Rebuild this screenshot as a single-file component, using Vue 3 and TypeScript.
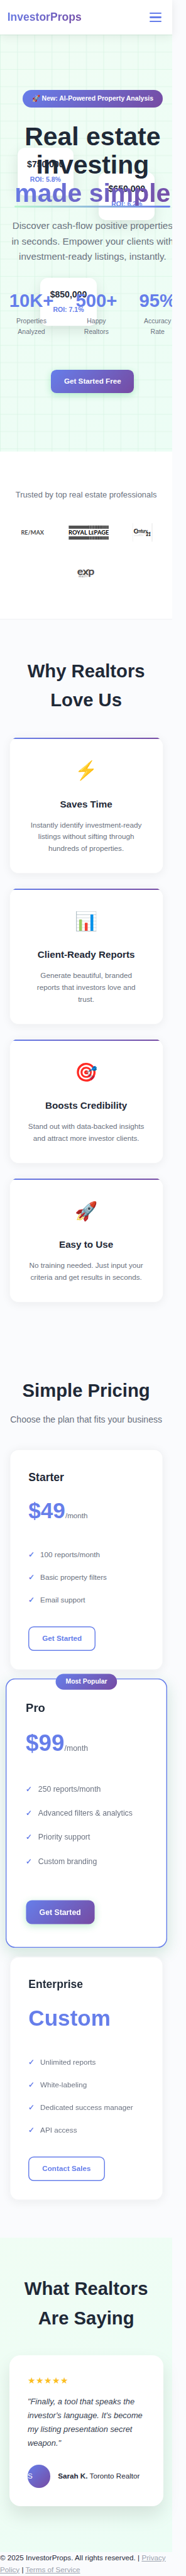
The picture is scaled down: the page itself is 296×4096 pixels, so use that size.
<script setup lang="ts">
interface Feature { icon: string; title: string; text: string }
interface Plan { name: string; price: string; unit?: string; items: string[]; cta: string; popular?: boolean }

const listings = [
  { id: 'one', price: '$750,000', roi: 'ROI: 5.8%' },
  { id: 'two', price: '$650,000', roi: 'ROI: 6.2%' },
  { id: 'three', price: '$850,000', roi: 'ROI: 7.1%' },
]
const stats = [
  { value: '10K+', label: 'Properties Analyzed' },
  { value: '500+', label: 'Happy Realtors' },
  { value: '95%', label: 'Accuracy Rate' },
]
const features: Feature[] = [
  { icon: '⚡', title: 'Saves Time', text: 'Instantly identify investment-ready\nlistings without sifting through\nhundreds of properties.' },
  { icon: '📊', title: 'Client-Ready Reports', text: 'Generate beautiful, branded\nreports that investors love and\ntrust.' },
  { icon: '🎯', title: 'Boosts Credibility', text: 'Stand out with data-backed insights\nand attract more investor clients.' },
  { icon: '🚀', title: 'Easy to Use', text: 'No training needed. Just input your\ncriteria and get results in seconds.' },
]
const plans: Plan[] = [
  { name: 'Starter', price: '$49', unit: '/month', items: ['100 reports/month', 'Basic property filters', 'Email support'], cta: 'Get Started' },
  { name: 'Pro', price: '$99', unit: '/month', items: ['250 reports/month', 'Advanced filters & analytics', 'Priority support', 'Custom branding'], cta: 'Get Started', popular: true },
  { name: 'Enterprise', price: 'Custom', items: ['Unlimited reports', 'White-labeling', 'Dedicated success manager', 'API access'], cta: 'Contact Sales' },
]
const barcode = [44, 47, 49.5, 53, 55, 58, 60.5, 62.5, 65, 67, 69.5, 71.5, 74, 76.5, 79, 81.5, 84, 86.5]
</script>

<template>
  <div class="page">
    <header class="nav">
      <div class="brand">InvestorProps</div>
      <div class="burger"><span></span><span></span><span></span></div>
    </header>

    <section class="hero">
      <svg class="grid" width="375" height="907">
        <defs>
          <pattern id="cells" width="75" height="75" patternUnits="userSpaceOnUse">
            <path d="M38 0V75M0 38H75" stroke="#e3f7ec" stroke-width="2" />
            <path d="M.5 0V75M0 .5H75" stroke="#d3f3e1" stroke-width="1" />
          </pattern>
        </defs>
        <rect width="375" height="907" fill="url(#cells)" />
      </svg>
      <div v-for="l in listings" :key="l.id" class="listing" :class="l.id">
        <div class="listing-price">{{ l.price }}</div>
        <div class="listing-roi">{{ l.roi }}</div>
      </div>
      <div class="hero-content">
        <div class="badge">🚀 New: AI-Powered Property Analysis</div>
        <h1>Real estate investing <span class="highlight">made simple</span></h1>
        <p class="lead">Discover cash-flow positive properties in seconds. Empower your clients with investment-ready listings, instantly.</p>
        <div class="stats">
          <div v-for="s in stats" :key="s.value" class="stat">
            <div class="stat-value">{{ s.value }}</div>
            <div class="stat-label">{{ s.label }}</div>
          </div>
        </div>
        <a class="btn primary">Get Started Free</a>
      </div>
    </section>

    <section class="trusted">
      <p>Trusted by top real estate professionals</p>
      <div class="logos">
        <svg width="62" height="40" viewBox="0 0 62 40">
          <text x="6" y="24.6" class="lg" font-size="13" font-weight="700" textLength="50" lengthAdjust="spacingAndGlyphs" fill="#4b4b4b">RE/MAX</text>
        </svg>
        <svg width="88" height="40" viewBox="0 0 88 40">
          <path d="M.5 5H44V12H.5ZM.5 28.5H44V35.5H.5Z" fill="#505050" />
          <path d="M44 5H87.5V12H44ZM44 28.5H87.5V35.5H44Z" fill="#8d8d8d" />
          <path v-for="b in barcode" :key="b" :d="`M${b} 5V12M${b} 28.5V35.5`" stroke="#2c2c2c" stroke-width="1.2" />
          <text x="0" y="24.8" class="lg" font-size="12" font-weight="700" textLength="88" lengthAdjust="spacingAndGlyphs" fill="#000">ROYAL L<tspan font-size="9">E</tspan>PAGE</text>
        </svg>
        <svg width="51" height="40" viewBox="0 0 51 40">
          <path d="M4.5 0V40" stroke="#efefef" />
          <path d="M46.5 0V40" stroke="#f2f2f2" stroke-width="3" />
          <path d="M7 27H28M17 25Q27 21 36 24" stroke="#e2e2e2" stroke-width="1.5" fill="none" />
          <text x="6.5" y="21.5" class="lg" font-size="13" textLength="9" lengthAdjust="spacingAndGlyphs" stroke="#111" stroke-width=".6" fill="#111">C</text>
          <text x="13.5" y="20.5" class="lg" font-size="9.5" textLength="23" lengthAdjust="spacingAndGlyphs" stroke="#222" stroke-width=".4" fill="#222">entury</text>
          <text x="33.5" y="28" class="lg" font-size="9.5" font-weight="700" font-style="italic" textLength="10" lengthAdjust="spacingAndGlyphs" stroke="#111" stroke-width=".5" fill="#111">21</text>
        </svg>
        <svg width="40" height="40" viewBox="0 0 40 40">
          <text x="1.5" y="23.6" class="lg" font-size="20" textLength="37" lengthAdjust="spacingAndGlyphs" stroke="#4a4a4a" stroke-width=".8" fill="#4a4a4a">exp</text>
          <path d="M16.5 23.3L26 11.2" stroke="#4a4a4a" stroke-width="1.8" />
          <text x="4.5" y="28.8" class="lg" font-size="4" font-weight="700" textLength="19" lengthAdjust="spacing" fill="#777">REALTY</text>
        </svg>
      </div>
    </section>

    <section class="features">
      <h2>Why Realtors Love Us</h2>
      <div class="feature-list">
        <article v-for="f in features" :key="f.title" class="feature">
          <div class="feature-icon">{{ f.icon }}</div>
          <h3>{{ f.title }}</h3>
          <p>{{ f.text }}</p>
        </article>
      </div>
    </section>

    <section class="pricing">
      <h2>Simple Pricing</h2>
      <p class="sub">Choose the plan that fits your business</p>
      <div class="plans">
        <article v-for="p in plans" :key="p.name" class="plan" :class="{ popular: p.popular }">
          <div v-if="p.popular" class="ribbon">Most Popular</div>
          <h3>{{ p.name }}</h3>
          <div class="price">{{ p.price }}<span v-if="p.unit">{{ p.unit }}</span></div>
          <ul>
            <li v-for="i in p.items" :key="i">{{ i }}</li>
          </ul>
          <a class="btn" :class="p.popular ? 'primary' : 'outline'">{{ p.cta }}</a>
        </article>
      </div>
    </section>

    <section class="testimonials">
      <h2>What Realtors Are Saying</h2>
      <article class="quote-card">
        <div class="stars">★★★★★</div>
        <p class="quote">"Finally, a tool that speaks the investor's language. It's become my listing presentation secret weapon."</p>
        <div class="author">
          <div class="avatar">S</div>
          <div><strong>Sarah K.</strong> Toronto Realtor</div>
        </div>
      </article>
    </section>

    <footer>© 2025 InvestorProps. All rights reserved. | <a>Privacy Policy</a> | <a>Terms of Service</a></footer>
  </div>
</template>

<style>
html, body { margin: 0; background: #fafbfd; }
</style>

<style scoped>
.page {
  zoom: 0.7313;
  width: 404.75px;
  height: 5601px;
  overflow: hidden;
  box-sizing: border-box;
  padding-right: 29.75px;
  font-family: "Liberation Sans", Arial, sans-serif;
  font-size: 16px;
  line-height: 1.6;
  color: #1f2937;
  background: #fafbfd;
}
* { box-sizing: border-box; }
h1, h2, h3, p, ul { margin: 0; padding: 0; }

.nav {
  position: relative;
  z-index: 5;
  display: flex;
  justify-content: space-between;
  align-items: center;
  height: 75px;
  padding: 0 24px 0 16px;
  background: #fff;
  box-shadow: 0 4px 20px rgba(0, 0, 0, .08), 0 1px 0 rgba(0, 0, 0, .04);
}
.brand {
  font-size: 24px;
  font-weight: 700;
  background: linear-gradient(135deg, #667eea, #764ba2);
  -webkit-background-clip: text;
  background-clip: text;
  color: transparent;
}
.burger { display: flex; flex-direction: column; gap: 6px; }
.burger span { width: 25px; height: 3px; border-radius: 2px; background: #667eea; }

.hero {
  position: relative;
  height: 907px;
  padding: 120px 20px 0;
  overflow: hidden;
  background: linear-gradient(135deg, #f0fdf4, #ecfdf5);
}
.grid { position: absolute; left: 0; top: 0; }
.hero-content { position: relative; width: 363px; text-align: center; }
.badge {
  display: inline-block;
  vertical-align: top;
  padding: 8px 20px;
  border-radius: 50px;
  font-size: 14.4px;
  font-weight: 600;
  white-space: nowrap;
  color: #fff;
  background: linear-gradient(135deg, #667eea, #764ba2);
}
h1 { margin-top: 32px; font-size: 56px; line-height: 1.1; font-weight: 800; }
.highlight {
  position: relative;
  display: inline-block;
  white-space: nowrap;
  background: linear-gradient(135deg, #667eea, #764ba2);
  -webkit-background-clip: text;
  background-clip: text;
  color: transparent;
}
.highlight::after {
  content: "";
  position: absolute;
  left: 0;
  right: 0;
  bottom: 0;
  height: 3px;
  border-radius: 2px;
  background: linear-gradient(90deg, #bbf7d0, #667eea);
}
.lead { margin-top: 24px; font-size: 20.8px; color: #6b7280; }
.stats { display: flex; gap: 48px; margin: 48px 0; }
.stat { width: min-content; }
.stat-value { font-size: 40px; font-weight: 700; color: #667eea; }
.stat-label { font-size: 14.4px; color: #6b7280; }
.listing {
  position: absolute;
  width: 122px;
  height: 103.6px;
  padding: 20px 0;
  border-radius: 16px;
  text-align: center;
  background: #fff;
  box-shadow: 0 10px 30px rgba(0, 0, 0, .1);
}
.one { left: 38px; top: 247px; }
.two { left: 215px; top: 300px; }
.three { left: 88px; top: 530px; }
.listing-price { font-size: 19.2px; font-weight: 700; margin-bottom: 8px; }
.listing-roi { font-size: 14.4px; font-weight: 600; color: #667eea; line-height: 1.4; }

.btn {
  display: inline-block;
  vertical-align: top;
  padding: 12px 28px;
  border-radius: 12px;
  font-weight: 600;
  white-space: nowrap;
}
.primary {
  margin: 24px 0 7px;
  color: #fff;
  background: linear-gradient(135deg, #667eea, #764ba2);
  box-shadow: 0 4px 15px rgba(34, 197, 94, .3);
}
.outline { padding: 14px 30px; box-shadow: inset 0 0 0 2px #667eea; color: #667eea; }

.trusted {
  height: 365px;
  padding: 80px 20px 0;
  background: #fff;
  border-bottom: 1px solid #f1f1f3;
  text-align: center;
}
.trusted p { font-size: 17.6px; color: #6b7280; margin-bottom: 48px; }
.logos { display: flex; flex-wrap: wrap; justify-content: center; gap: 48px; }
.lg { font-family: Lato, "Liberation Sans", sans-serif; }

h2 { font-size: 40px; font-weight: 700; text-align: center; }
.features { padding: 80px 20px; }
.features h2 { margin-bottom: 48px; padding: 0 30px; }
.feature-list { display: grid; gap: 32px; }
.feature {
  position: relative;
  overflow: hidden;
  padding: 41px 20px;
  border-radius: 20px;
  text-align: center;
  background: #fff;
  box-shadow: inset 0 0 0 1px #f3f4f6, 0 4px 20px rgba(0, 0, 0, .06);
}
.feature::before {
  content: "";
  position: absolute;
  left: 1px;
  right: 1px;
  top: 1px;
  height: 3px;
  background: linear-gradient(135deg, #667eea, #764ba2);
}
.feature-icon { height: 64px; margin-bottom: 24px; font-size: 40px; }
.feature h3 { margin-bottom: 16px; font-size: 20.8px; }
.feature p { color: #6b7280; white-space: pre-line; }

.pricing { padding: 80px 20px; }
.sub { margin: 16px -10px 48px; font-size: 19.2px; color: #6b7280; text-align: center; }
.plans { display: grid; gap: 32px; }
.plan {
  position: relative;
  padding: 42px;
  border-radius: 20px;
  background: #fff;
  box-shadow: inset 0 0 0 2px #f3f4f6, 0 4px 20px rgba(0, 0, 0, .06);
}
.popular {
  transform: scale(1.05);
  box-shadow: inset 0 0 0 2px #667eea, 0 10px 30px rgba(34, 140, 80, .2);
}
.plan:last-child { z-index: 1; }
.ribbon {
  position: absolute;
  top: -10px;
  left: 50%;
  transform: translateX(-50%);
  padding: 6px 20px;
  border-radius: 20px;
  font-size: 13.6px;
  font-weight: 600;
  white-space: nowrap;
  color: #fff;
  background: linear-gradient(135deg, #667eea, #764ba2);
}
.plan h3 { margin-bottom: 16px; font-size: 24px; }
.price { margin-bottom: 32px; font-size: 48px; font-weight: 800; color: #667eea; }
.price span { font-size: 16px; font-weight: 400; color: #6b7280; }
.plan ul { margin-bottom: 32px; list-style: none; }
.plan li { display: flex; gap: 12px; padding: 12px 0; color: #6b7280; }
.plan li::before { content: "✓"; color: #667eea; font-weight: 700; }

.testimonials {
  height: 684.3px;
  padding: 80px 20px 0;
  background: linear-gradient(135deg, #f0fdf4, #ecfdf5);
}
.testimonials h2 { margin-bottom: 48px; }
.quote-card {
  padding: 40px;
  border-radius: 24px;
  background: #fff;
  box-shadow: 0 20px 40px rgba(0, 0, 0, .1);
}
.stars { height: 30.7px; margin-bottom: 16px; font-size: 19.2px; color: #fbbf24; }
.quote { margin-bottom: 32px; font-size: 17.6px; line-height: 1.7; font-style: italic; color: #374151; }
.author { display: flex; align-items: center; gap: 16px; white-space: nowrap; }
.avatar {
  width: 50px;
  height: 50px;
  line-height: 50px;
  border-radius: 50%;
  color: #fff;
  background: linear-gradient(135deg, #667eea, #764ba2);
}
footer a { color: #9ca3af; text-decoration: underline; }
</style>
